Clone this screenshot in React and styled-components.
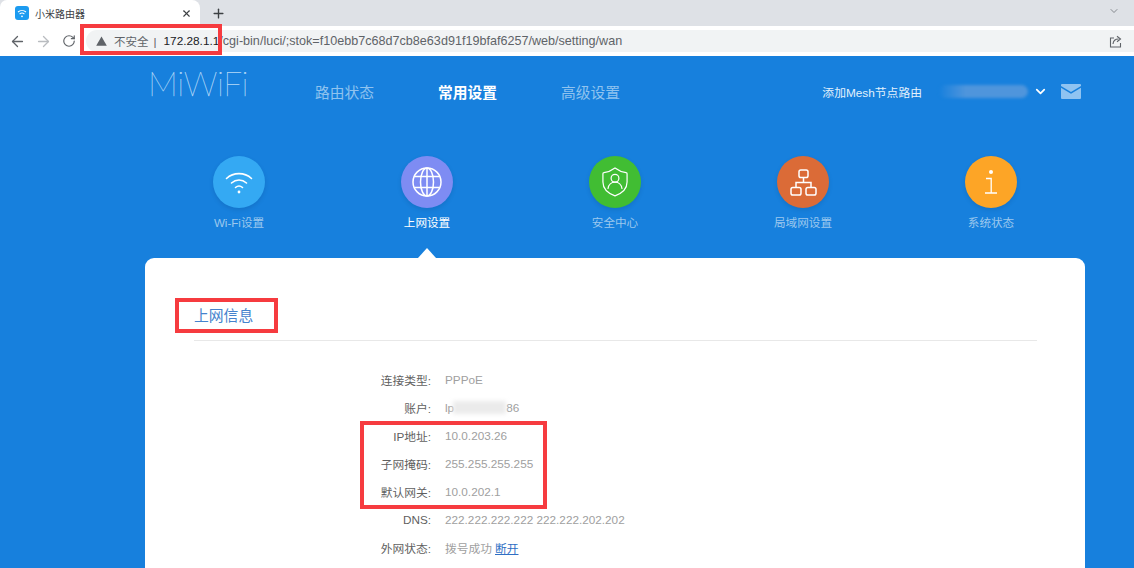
import React from "react";
import styled, { createGlobalStyle } from "styled-components";
import { ArrowLeft, ArrowRight, RotateCw, X, Plus, ChevronDown } from "lucide-react";

const CJK = `"Liberation Sans", "Noto Sans CJK SC", sans-serif`;

const Global = createGlobalStyle`
  html, body { margin: 0; padding: 0; height: 100%; overflow: hidden; background: #1780dd; }
  #root { height: 100%; }
  * { box-sizing: border-box; }
`;

const Page = styled.div`
  position: relative;
  width: 1134px;
  height: 568px;
  overflow: hidden;
  display: flex;
  flex-direction: column;
  font-family: ${CJK};
`;

const TabStrip = styled.div`
  height: 26px;
  flex: none;
  background: #dee1e6;
  display: flex;
  align-items: flex-end;
  padding-right: 14px;
`;
const Tab = styled.div`
  width: 200px;
  height: 26px;
  background: #fff;
  border-radius: 7px 8px 0 0;
  display: flex;
  align-items: center;
  padding: 0 8px 0 15px;
  gap: 6px;
`;
const TabTitle = styled.span`
  font-size: 10px;
  color: #3c4043;
  flex: 1;
`;
const NewTab = styled.div`
  width: 36px;
  height: 26px;
  display: flex;
  align-items: center;
  justify-content: center;
  color: #3c4043;
`;
const StripEnd = styled.div`
  margin-left: auto;
  height: 26px;
  display: flex;
  align-items: flex-start;
  padding-top: 5px;
  color: #5f6368;
`;
const Toolbar = styled.div`
  height: 30px;
  flex: none;
  background: #fff;
  display: flex;
  align-items: flex-start;
  padding: 4px 0 0 4px;
`;
const NavIcons = styled.div`
  display: grid;
  grid-template-columns: repeat(3, 26px);
  justify-items: center;
  align-items: center;
  height: 22px;
  width: 82px;
`;
const Omnibox = styled.div`
  flex: 1;
  height: 22px;
  border-radius: 11px 0 0 11px;
  background: #f1f3f4;
  display: flex;
  align-items: center;
  padding: 0 12px 0 10px;
  white-space: nowrap;
`;
const Insecure = styled.span`
  color: #5f6368;
  margin-left: 7px;
  font-size: 11.5px;
`;
const Divider = styled.span`
  color: #5f6368;
  margin: 0 7px 0 5px;
  font-size: 11.6px;
`;
const Host = styled.span`
  color: #202124;
  font-size: 11.8px;
`;
const UrlPath = styled.span`
  color: #5f6368;
  flex: 1;
  font-size: 12.6px;
`;

const Blue = styled.div`
  flex: 1;
  background: #1780dd;
  border-top: 1px solid #1780dd;
  display: flex;
  flex-direction: column;
  min-height: 0;
`;
const Header = styled.header`
  height: 71px;
  flex: none;
  display: flex;
  align-items: flex-start;
  padding: 0 53px 0 148px;
`;
const Logo = styled.div`
  font-family: Lato, sans-serif;
  font-weight: 100;
  font-size: 33.5px;
  line-height: 40px;
  margin-top: 6px;
  color: #b7dbf8;
  -webkit-text-stroke: 0.25px #b7dbf8;
  width: 167px;
  letter-spacing: -0.4px;
`;
const MainNav = styled.nav`
  display: flex;
  gap: 64px;
  margin-top: 25px;
`;
const NavLink = styled.a`
  font-size: 14.75px;
  line-height: 22px;
  font-weight: ${p => (p.$active ? 700 : 400)};
  color: ${p => (p.$active ? "#fff" : "#8fc3ef")};
`;
const Account = styled.div`
  margin-left: auto;
  margin-top: 23px;
  display: flex;
  align-items: center;
  height: 22px;
  color: #e3f1fc;
  font-size: 11.8px;
`;
const Redacted = styled.span`
  display: block;
  width: 89px;
  height: 13px;
  margin: 0 5px 0 17px;
  border-radius: 7px;
  background: linear-gradient(90deg, #1780dd 0%, #4f95dc 30%, #4f95dc 100%);
  filter: blur(1.5px);
`;
const Mail = styled.svg`
  margin-left: 13px;
`;

const Shortcuts = styled.div`
  display: flex;
  justify-content: center;
  margin: 28px 49px 0 145px;
  flex: none;
  height: 102px;
`;
const Shortcut = styled.div`
  position: relative;
  width: 188px;
  display: flex;
  flex-direction: column;
  align-items: center;
`;
const Circle = styled.div`
  width: 52px;
  height: 52px;
  border-radius: 50%;
  background: ${p => p.$bg};
  box-shadow: 0 2px 4px rgba(0, 40, 90, 0.15);
  display: flex;
  align-items: center;
  justify-content: center;
`;
const ShortcutLabel = styled.div`
  margin-top: 7px;
  font-size: 11.6px;
  line-height: 16px;
  color: ${p => (p.$active ? "#fff" : "#9cc8ee")};
`;
const Caret = styled.div`
  position: absolute;
  left: 50%;
  bottom: 0;
  margin-left: -9px;
  width: 0;
  height: 0;
  border-left: 9px solid transparent;
  border-right: 9px solid transparent;
  border-bottom: 10px solid #fff;
`;

const Card = styled.section`
  flex: 1;
  margin: 0 49px 0 145px;
  background: #fff;
  border-radius: 9px 9px 0 0;
  padding: 46px 48px 0 49px;
  min-height: 0;
`;
const CardTitle = styled.h2`
  margin: 0;
  font-size: 14.8px;
  font-weight: 400;
  line-height: 24px;
  height: 37px;
  color: #4583cd;
  border-bottom: 1px solid #e8e8e8;
`;
const Rows = styled.dl`
  margin: 24px 0 0;
  padding: 0;
`;
const Row = styled.div`
  display: flex;
  height: 28px;
  align-items: center;
  font-size: 11.75px;
`;
const Key = styled.dt`
  width: 237px;
  text-align: right;
  color: #5f5f5f;
  margin-right: 14px;
`;
const Val = styled.dd`
  margin: 0;
  color: #a0a0a0;
  display: flex;
  align-items: center;
  white-space: nowrap;
`;
const Smudge = styled.span`
  display: inline-block;
  width: 53px;
  height: 13px;
  margin-left: -1px;
  background: #ebebeb;
  filter: blur(2px);
`;
const Link = styled.a`
  color: #2f6fc4;
  text-decoration: underline;
  margin-left: 3px;
`;

const Mark = styled.div`
  position: absolute;
  left: ${p => p.$x}px;
  top: ${p => p.$y}px;
  width: ${p => p.$w}px;
  height: ${p => p.$h}px;
  border: 4px solid #f63b3f;
  pointer-events: none;
`;

const WifiGlyph = ({ size = 30 }) => (
  <svg width={size} height={size} viewBox="0 0 30 30" fill="none" stroke="#fff" strokeWidth="1.6" strokeLinecap="round">
    <path d="M2.5 11.5C9.5 5 20.5 5 27.5 11.5" />
    <path d="M7.5 16C12 12 18 12 22.5 16" />
    <path d="M11.5 20.5C13.5 18.8 16.5 18.8 18.5 20.5" />
    <circle cx="15" cy="25" r="1.4" fill="#fff" stroke="none" />
  </svg>
);
const Globe = () => (
  <svg width="30" height="30" viewBox="0 0 30 30" fill="none" stroke="#fff" strokeWidth="1.5">
    <circle cx="15" cy="15" r="14" />
    <ellipse cx="15" cy="15" rx="6.5" ry="14" />
    <path d="M15 1v28M2.5 9.5h25M2.5 20.5h25" />
  </svg>
);
const Shield = () => (
  <svg width="26" height="30" viewBox="0 0 28 32" fill="none" stroke="#fff" strokeWidth="1.3" strokeLinecap="round">
    <path d="M14 1C10 4 6 5.5 2 6c-.6 0-1 .4-1 1v9c0 7 5 12 13 15 8-3 13-8 13-15V7c0-.6-.4-1-1-1-4-.5-8-2-12-5z" />
    <circle cx="14" cy="12" r="4.2" />
    <path d="M6.5 23c.5-4 3.5-6.8 7.5-6.8s7 2.8 7.5 6.8" />
  </svg>
);
const Network = () => (
  <svg width="27" height="27" viewBox="0 0 27 27" fill="none" stroke="#fff" strokeWidth="1.5">
    <rect x="9" y="1" width="9" height="7.5" rx="1.8" />
    <rect x="1" y="18.5" width="10" height="7.5" rx="1.8" />
    <rect x="16" y="18.5" width="10" height="7.5" rx="1.8" />
    <path d="M13.5 8.5v5M6 18.5v-5h15v5" />
  </svg>
);
const InfoI = () => (
  <svg width="12" height="24" viewBox="0 0 12 24" fill="none" stroke="#fff" strokeWidth="1.3">
    <circle cx="6" cy="2" r="2" fill="#fff" stroke="none" />
    <path d="M1 8.5h5.2v14.5M0 23h12" />
  </svg>
);
const Warn = () => (
  <svg width="11" height="10" viewBox="0 0 11 10"><path d="M5.5 0.5L10.8 9.7H0.2z" fill="#5f6368" /></svg>
);
const ShareBox = () => (
  <svg width="13" height="13" viewBox="0 0 13 13" fill="none" stroke="#5f6368" strokeWidth="1.1">
    <path d="M5 3H1.5v9h10V8" />
    <path d="M4 9c.3-3 2.4-5 5.5-5M8 1.2L11.5 4 8 6.8" />
  </svg>
);

const shortcuts = [
  { label: "Wi-Fi设置", bg: "#34a9f3", icon: <WifiGlyph /> },
  { label: "上网设置", bg: "#7e8cf3", icon: <Globe />, active: true },
  { label: "安全中心", bg: "#41bd33", icon: <Shield /> },
  { label: "局域网设置", bg: "#db6b37", icon: <Network /> },
  { label: "系统状态", bg: "#fda526", icon: <InfoI /> },
];

export default function App() {
  return (
    <Page>
      <Global />
      <TabStrip>
        <Tab>
          <svg width="14" height="14" viewBox="0 0 14 14">
            <rect width="14" height="14" rx="3" fill="#1c9bf0" />
            <path d="M3 6c2.3-2 5.7-2 8 0M4.6 8c1.4-1.1 3.4-1.1 4.8 0" fill="none" stroke="#fff" strokeWidth="1.1" />
            <circle cx="7" cy="10.3" r="0.9" fill="#fff" />
          </svg>
          <TabTitle>小米路由器</TabTitle>
          <X size={11} color="#3c4043" strokeWidth={2.4} />
        </Tab>
        <NewTab><Plus size={15} strokeWidth={2.2} /></NewTab>
        <StripEnd><ChevronDown size={12} strokeWidth={1.4} /></StripEnd>
      </TabStrip>
      <Toolbar>
        <NavIcons>
          <ArrowLeft size={17} color="#5f6368" strokeWidth={1.8} />
          <ArrowRight size={17} color="#b9bcc0" strokeWidth={1.8} />
          <RotateCw size={14} color="#5f6368" strokeWidth={2} />
        </NavIcons>
        <Omnibox>
          <Warn />
          <Insecure>不安全</Insecure>
          <Divider>|</Divider>
          <Host>172.28.1.1</Host>
          <UrlPath>/cgi-bin/luci/;stok=f10ebb7c68d7cb8e63d91f19bfaf6257/web/setting/wan</UrlPath>
          <ShareBox />
        </Omnibox>
      </Toolbar>
      <Blue>
        <Header>
          <Logo>MiWiFi</Logo>
          <MainNav>
            <NavLink>路由状态</NavLink>
            <NavLink $active>常用设置</NavLink>
            <NavLink>高级设置</NavLink>
          </MainNav>
          <Account>
            添加Mesh节点路由
            <Redacted />
            <ChevronDown size={15} color="#fff" strokeWidth={2.8} />
            <Mail width="20" height="15" viewBox="0 0 20 15">
              <path d="M1 0h18a1 1 0 0 1 1 1v1l-10 6L0 2V1a1 1 0 0 1 1-1z" fill="#8fc3f1" />
              <path d="M0 3.8l10 6 10-6V14a1 1 0 0 1-1 1H1a1 1 0 0 1-1-1z" fill="#8fc3f1" />
            </Mail>
          </Account>
        </Header>
        <Shortcuts>
          {shortcuts.map(s => (
            <Shortcut key={s.label}>
              <Circle $bg={s.bg}>{s.icon}</Circle>
              <ShortcutLabel $active={s.active}>{s.label}</ShortcutLabel>
              {s.active && <Caret />}
            </Shortcut>
          ))}
        </Shortcuts>
        <Card>
          <CardTitle>上网信息</CardTitle>
          <Rows>
            <Row><Key>连接类型:</Key><Val>PPPoE</Val></Row>
            <Row><Key>账户:</Key><Val>lp<Smudge />86</Val></Row>
            <Row><Key>IP地址:</Key><Val>10.0.203.26</Val></Row>
            <Row><Key>子网掩码:</Key><Val>255.255.255.255</Val></Row>
            <Row><Key>默认网关:</Key><Val>10.0.202.1</Val></Row>
            <Row><Key>DNS:</Key><Val>222.222.222.222 222.222.202.202</Val></Row>
            <Row><Key>外网状态:</Key><Val>拨号成功 <Link>断开</Link></Val></Row>
          </Rows>
        </Card>
      </Blue>
      <Mark $x={80} $y={24} $w={142} $h={31} />
      <Mark $x={175} $y={298} $w={103} $h={35} />
      <Mark $x={360} $y={421} $w={187} $h={88} />
    </Page>
  );
}
